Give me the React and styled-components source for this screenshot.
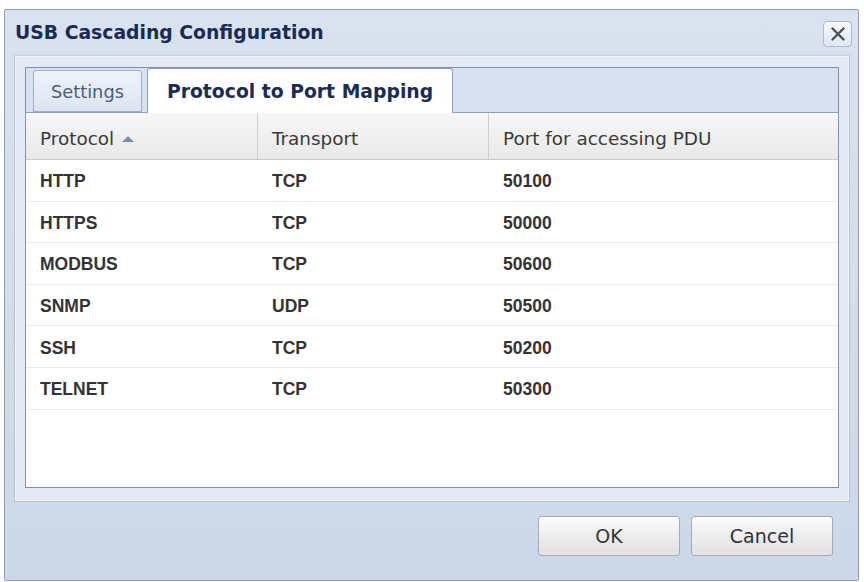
import React from 'react';
import styled, { createGlobalStyle } from 'styled-components';

const GlobalStyle = createGlobalStyle`
    html, body {
        margin: 0;
        padding: 0;
        background: #ffffff;
    }
    body {
        font-family: "DejaVu Sans", Verdana, sans-serif;
    }
`;

// dialog frame
const Page = styled.div`
    padding: 9px 5px 0 4px;
`;

const Window = styled.div`
    height: 572px;
    box-sizing: border-box;
    border: 1px solid #8e9aae;
    border-radius: 2px;
    background: linear-gradient(#d9e2ef, #ccd8e8);
    display: flex;
    flex-direction: column;
`;

const TitleBar = styled.div`
    height: 45px;
    display: flex;
    align-items: center;
    justify-content: space-between;
    padding: 0 6px 0 10px;
`;

const Title = styled.h1`
    margin: 0;
    font-size: 18.8px;
    font-weight: bold;
    color: #1b2b52;
`;

const CloseButton = styled.button`
    width: 29px;
    height: 26px;
    padding: 0;
    margin-top: 3px;
    border: 1px solid #aebbcd;
    border-radius: 4px;
    background: linear-gradient(#f6f9fd, #dfe7f2);
    display: flex;
    align-items: center;
    justify-content: center;
`;

const Body = styled.div`
    flex: 1;
    margin: 0 8px 0 9px;
    padding: 11px 10px 13px 10px;
    border: 1px solid #b3c1d4;
    border-top-color: #c9d5e5;
    background: #e3eaf5;
    box-shadow: inset 0 0 0 1px #f2f6fb;
    display: flex;
    flex-direction: column;
`;

const TabPanel = styled.div`
    flex: 1;
    border: 1px solid #7f91ab;
    background: #ffffff;
    display: flex;
    flex-direction: column;
`;

const TabStrip = styled.div`
    height: 45px;
    box-sizing: border-box;
    background: #d7e1ef;
    border-bottom: 1px solid #8c9fbc;
    display: flex;
    align-items: flex-end;
    gap: 5px;
    padding-left: 7px;
`;

const Tab = styled.div`
    box-sizing: border-box;
    height: ${p => (p.$active ? '45px' : '42px')};
    margin-bottom: ${p => (p.$active ? '-1px' : '0')};
    padding: 0 ${p => (p.$active ? '19px' : '17px')};
    border: 1px solid ${p => (p.$active ? '#8c9fbc' : '#9fb0c8')};
    border-bottom: ${p => (p.$active ? 'none' : '1px solid #9fb0c8')};
    border-radius: 3px 3px 0 0;
    background: ${p => (p.$active ? '#ffffff' : 'linear-gradient(#eef3fa, #dce5f1)')};
    color: ${p => (p.$active ? '#1b2b52' : '#4d5c78')};
    font-size: ${p => (p.$active ? '18.8px' : '17.8px')};
    font-weight: ${p => (p.$active ? 'bold' : 'normal')};
    display: flex;
    align-items: center;
`;

// grid
const Grid = styled.div`
    flex: 1;
    display: flex;
    flex-direction: column;
`;

const HeaderRow = styled.div`
    display: grid;
    grid-template-columns: 232px 231px 1fr;
    height: 47px;
    box-sizing: border-box;
    background: linear-gradient(#f7f7f7, #e9e9e9);
    border-bottom: 1px solid #c9c9c9;
`;

const HeaderCell = styled.div`
    display: flex;
    align-items: center;
    gap: 8px;
    padding: 4px 0 0 14px;
    font-size: 18.4px;
    color: #3a3a3a;
    border-right: ${p => (p.$last ? 'none' : '1px solid #cfcfcf')};
`;

const SortArrow = styled.span`
    width: 0;
    height: 0;
    border-left: 6px solid transparent;
    border-right: 6px solid transparent;
    border-bottom: 6px solid #7d8ea8;
    margin-top: 1px;
`;

const Row = styled.div`
    display: grid;
    grid-template-columns: 232px 231px 1fr;
    height: 41.6px;
    box-sizing: border-box;
    border-bottom: 1px solid #ebebeb;
`;

const Cell = styled.div`
    display: flex;
    align-items: center;
    padding: 3px 0 0 14px;
    font-family: "Liberation Sans", Arial, sans-serif;
    font-size: 17.5px;
    font-weight: bold;
    color: #333333;
`;

// footer
const Footer = styled.div`
    height: 78px;
    display: flex;
    justify-content: flex-end;
    align-items: flex-start;
    gap: 11px;
    padding: 14px 25px 0 0;
    box-sizing: border-box;
`;

const Button = styled.button`
    width: 142px;
    height: 40px;
    border: 1px solid #a7acb3;
    border-radius: 3px;
    background: linear-gradient(#fbfbfb, #ececec 55%, #e2e2e2);
    font-family: "DejaVu Sans", Verdana, sans-serif;
    font-size: 19px;
    color: #333333;
    padding: 0;
`;

const rows = [
    { protocol: 'HTTP', transport: 'TCP', port: '50100' },
    { protocol: 'HTTPS', transport: 'TCP', port: '50000' },
    { protocol: 'MODBUS', transport: 'TCP', port: '50600' },
    { protocol: 'SNMP', transport: 'UDP', port: '50500' },
    { protocol: 'SSH', transport: 'TCP', port: '50200' },
    { protocol: 'TELNET', transport: 'TCP', port: '50300' },
];

export default function App() {
    return (
        <Page>
            <GlobalStyle />
            <Window>
                <TitleBar>
                    <Title>USB Cascading Configuration</Title>
                    <CloseButton aria-label="Close">
                        <svg width="16" height="16" viewBox="0 0 16 16">
                            <path d="M2.5 2.5 L13.5 13.5 M13.5 2.5 L2.5 13.5" stroke="#4a4f58" strokeWidth="2.4" strokeLinecap="round" />
                        </svg>
                    </CloseButton>
                </TitleBar>

                <Body>
                    <TabPanel>
                        <TabStrip>
                            <Tab>Settings</Tab>
                            <Tab $active>Protocol to Port Mapping</Tab>
                        </TabStrip>

                        <Grid>
                            <HeaderRow>
                                <HeaderCell>Protocol <SortArrow /></HeaderCell>
                                <HeaderCell>Transport</HeaderCell>
                                <HeaderCell $last>Port for accessing PDU</HeaderCell>
                            </HeaderRow>
                            {rows.map(r => (
                                <Row key={r.protocol}>
                                    <Cell>{r.protocol}</Cell>
                                    <Cell>{r.transport}</Cell>
                                    <Cell>{r.port}</Cell>
                                </Row>
                            ))}
                        </Grid>
                    </TabPanel>
                </Body>

                <Footer>
                    <Button>OK</Button>
                    <Button>Cancel</Button>
                </Footer>
            </Window>
        </Page>
    );
}
